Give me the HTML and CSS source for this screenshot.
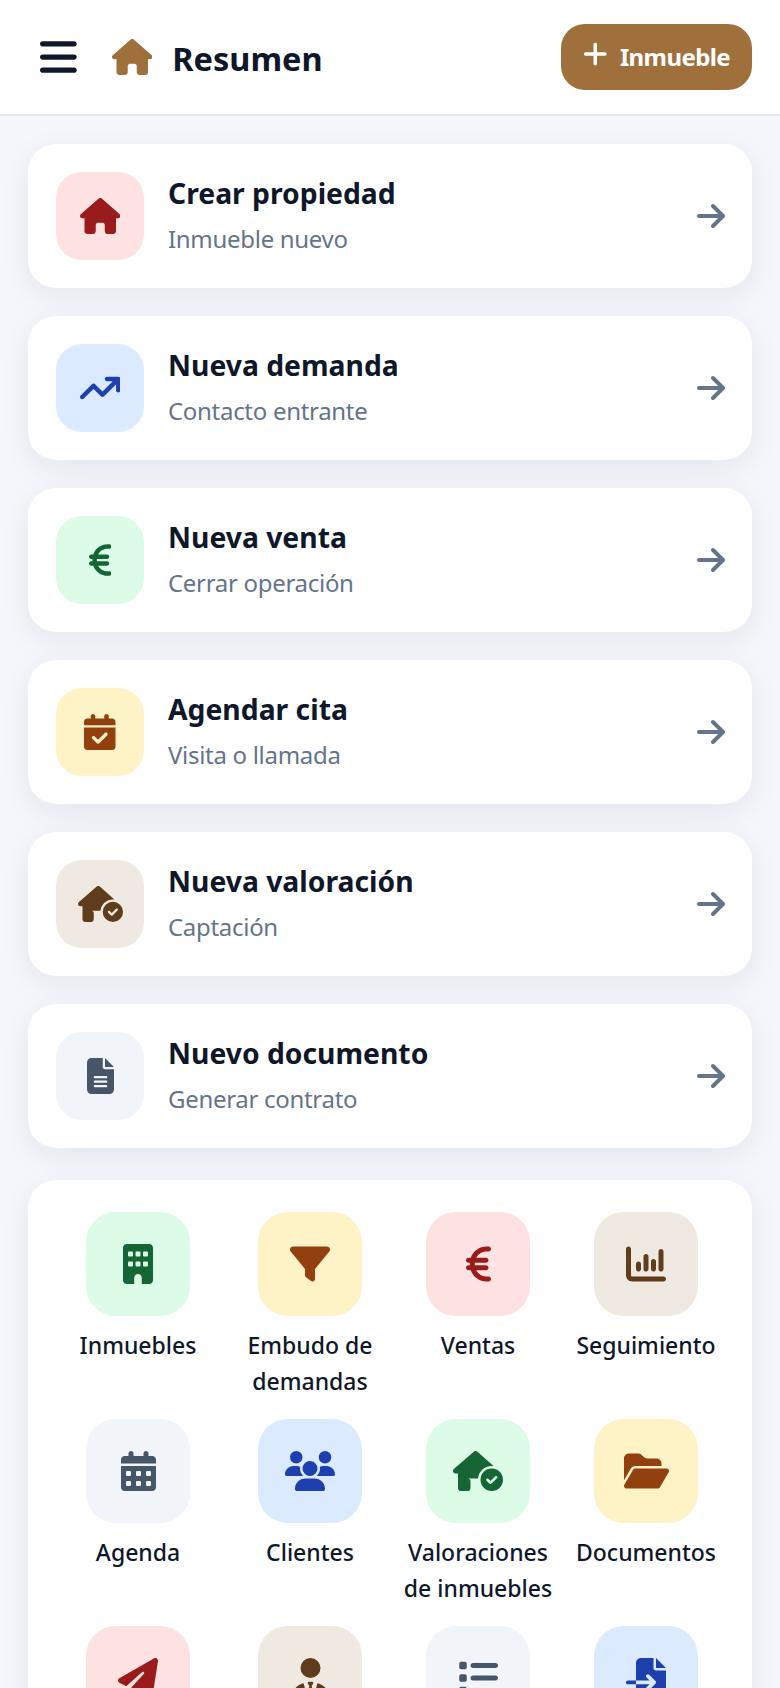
FILE: index.html
```html
<!DOCTYPE html>
<html lang="es">

<head>
    <meta charset="UTF-8">
    <title>Resumen</title>
    <link rel="stylesheet" href="styles.css">
</head>

<body>
    <svg class="sprite" xmlns="http://www.w3.org/2000/svg">
        <symbol id="i-house" viewBox="0 0 576 512"><path d="M575.8 255.5c0 18-15 32.1-32 32.1h-32l.7 160.2c0 2.7-.2 5.4-.5 8.1V472c0 22.1-17.9 40-40 40H456c-1.1 0-2.2 0-3.3-.1c-1.4 .1-2.8 .1-4.2 .1H416 392c-22.1 0-40-17.9-40-40V448 384c0-17.7-14.3-32-32-32H256c-17.7 0-32 14.3-32 32v64 24c0 22.1-17.9 40-40 40H160 128.1c-1.5 0-3-.1-4.5-.2c-1.2 .1-2.4 .2-3.6 .2H104c-22.1 0-40-17.9-40-40V360c0-.9 0-1.9 .1-2.8V287.6H32c-18 0-32-14-32-32.1c0-9 3-17 10-24L266.4 8c7-7 15-8 22-8s15 2 21 7L564.8 231.5c8 7 12 15 11 24z"/></symbol>
        <symbol id="i-euro" viewBox="0 0 320 512"><path d="M48.1 240c-.1 2.7-.1 5.3-.1 8v16c0 2.7 0 5.3 .1 8H32c-17.7 0-32 14.3-32 32s14.3 32 32 32H60.3C89.9 419.9 170 480 264 480h24c17.7 0 32-14.3 32-32s-14.3-32-32-32H264c-57.9 0-108.2-32.4-133.9-80H256c17.7 0 32-14.3 32-32s-14.3-32-32-32H112.2c-.1-2.6-.2-5.3-.2-8V248c0-2.7 .1-5.4 .2-8H256c17.7 0 32-14.3 32-32s-14.3-32-32-32H130.1c25.7-47.6 76-80 133.9-80h24c17.7 0 32-14.3 32-32s-14.3-32-32-32H264C170 32 89.9 92.1 60.3 176H32c-17.7 0-32 14.3-32 32s14.3 32 32 32H48.1z"/></symbol>
        <symbol id="i-house-check" viewBox="0 0 640 512"><path d="M320.7 352c8.1-89.7 83.5-160 175.3-160c8.9 0 17.6 .7 26.1 1.9L309.5 7c-6-5-14-7-21-7s-15 1-22 8L10 231.5c-7 7-10 15-10 24c0 18 14 32.1 32 32.1h32v69.7c-.1 .9-.1 1.8-.1 2.8V472c0 22.1 17.9 40 40 40h16c1.2 0 2.4-.1 3.6-.2c1.5 .1 3 .2 4.5 .2H160h24c22.1 0 40-17.9 40-40V448 384c0-17.7-14.3-32-32-32h64l.7 0zM640 368a144 144 0 1 0 -288 0 144 144 0 1 0 288 0zm-76.7-43.3c6.2 6.2 6.2 16.4 0 22.6l-72 72c-6.2 6.2-16.4 6.2-22.6 0l-40-40c-6.2-6.2-6.2-16.4 0-22.6s16.4-6.2 22.6 0L480 385.4l60.7-60.7c6.2-6.2 16.4-6.2 22.6 0z"/></symbol>
        <symbol id="i-arrow" viewBox="0 0 448 512"><path d="M438.6 278.6c12.5-12.5 12.5-32.8 0-45.3l-160-160c-12.5-12.5-32.8-12.5-45.3 0s-12.5 32.8 0 45.3L338.8 224 32 224c-17.7 0-32 14.3-32 32s14.3 32 32 32l306.7 0L233.4 393.4c-12.5 12.5-12.5 32.8 0 45.3s32.8 12.5 45.3 0l160-160z"/></symbol>
    </svg>

    <header class="topbar">
        <div class="topbar-left">
            <svg class="menu-icon" viewBox="0 0 448 512"><path d="M0 96C0 78.3 14.3 64 32 64H416c17.7 0 32 14.3 32 32s-14.3 32-32 32H32C14.3 128 0 113.7 0 96zM0 256c0-17.7 14.3-32 32-32H416c17.7 0 32 14.3 32 32s-14.3 32-32 32H32c-17.7 0-32-14.3-32-32zM448 416c0 17.7-14.3 32-32 32H32c-17.7 0-32-14.3-32-32s14.3-32 32-32H416c17.7 0 32 14.3 32 32z"/></svg>
            <svg class="brand-icon" viewBox="0 0 576 512"><use href="#i-house"/></svg>
            <h1 class="page-title">Resumen</h1>
        </div>
        <a class="add-btn" href="#">
            <svg class="add-icon" viewBox="0 0 448 512"><path d="M256 80c0-17.7-14.3-32-32-32s-32 14.3-32 32V224H48c-17.7 0-32 14.3-32 32s14.3 32 32 32H192V432c0 17.7 14.3 32 32 32s32-14.3 32-32V288H400c17.7 0 32-14.3 32-32s-14.3-32-32-32H256V80z"/></svg>
            <span class="add-label">Inmueble</span>
        </a>
    </header>

    <main class="content">
        <a class="action-card" href="#">
            <span class="tile red"><svg class="tile-icon" viewBox="0 0 576 512"><use href="#i-house"/></svg></span>
            <span class="action-text">
                <strong class="action-title">Crear propiedad</strong>
                <span class="action-sub">Inmueble nuevo</span>
            </span>
            <svg class="arrow" viewBox="0 0 448 512"><use href="#i-arrow"/></svg>
        </a>
        <a class="action-card" href="#">
            <span class="tile blue"><svg class="tile-icon" viewBox="0 0 576 512"><path d="M384 160c-17.7 0-32-14.3-32-32s14.3-32 32-32H544c17.7 0 32 14.3 32 32V288c0 17.7-14.3 32-32 32s-32-14.3-32-32V205.3L342.6 374.6c-12.5 12.5-32.8 12.5-45.3 0L192 269.3 54.6 406.6c-12.5 12.5-32.8 12.5-45.3 0s-12.5-32.8 0-45.3l160-160c12.5-12.5 32.8-12.5 45.3 0L320 306.7 466.7 160H384z"/></svg></span>
            <span class="action-text">
                <strong class="action-title">Nueva demanda</strong>
                <span class="action-sub">Contacto entrante</span>
            </span>
            <svg class="arrow" viewBox="0 0 448 512"><use href="#i-arrow"/></svg>
        </a>
        <a class="action-card" href="#">
            <span class="tile green"><svg class="tile-icon" viewBox="0 0 320 512"><use href="#i-euro"/></svg></span>
            <span class="action-text">
                <strong class="action-title">Nueva venta</strong>
                <span class="action-sub">Cerrar operación</span>
            </span>
            <svg class="arrow" viewBox="0 0 448 512"><use href="#i-arrow"/></svg>
        </a>
        <a class="action-card" href="#">
            <span class="tile amber"><svg class="tile-icon" viewBox="0 0 448 512"><path d="M128 0c17.7 0 32 14.3 32 32V64H288V32c0-17.7 14.3-32 32-32s32 14.3 32 32V64h48c26.5 0 48 21.5 48 48v48H0V112C0 85.5 21.5 64 48 64H96V32c0-17.7 14.3-32 32-32zM0 192H448V464c0 26.5-21.5 48-48 48H48c-26.5 0-48-21.5-48-48V192zM329 305c9.4-9.4 9.4-24.6 0-33.9s-24.6-9.4-33.9 0l-95 95-47-47c-9.4-9.4-24.6-9.4-33.9 0s-9.4 24.6 0 33.9l64 64c9.4 9.4 24.6 9.4 33.9 0L329 305z"/></svg></span>
            <span class="action-text">
                <strong class="action-title">Agendar cita</strong>
                <span class="action-sub">Visita o llamada</span>
            </span>
            <svg class="arrow" viewBox="0 0 448 512"><use href="#i-arrow"/></svg>
        </a>
        <a class="action-card" href="#">
            <span class="tile brown"><svg class="tile-icon" viewBox="0 0 640 512"><use href="#i-house-check"/></svg></span>
            <span class="action-text">
                <strong class="action-title">Nueva valoración</strong>
                <span class="action-sub">Captación</span>
            </span>
            <svg class="arrow" viewBox="0 0 448 512"><use href="#i-arrow"/></svg>
        </a>
        <a class="action-card" href="#">
            <span class="tile slate"><svg class="tile-icon" viewBox="0 0 384 512"><path d="M64 0C28.7 0 0 28.7 0 64V448c0 35.3 28.7 64 64 64H320c35.3 0 64-28.7 64-64V160H256c-17.7 0-32-14.3-32-32V0H64zM256 0V128H384L256 0zM112 256H272c8.8 0 16 7.2 16 16s-7.2 16-16 16H112c-8.8 0-16-7.2-16-16s7.2-16 16-16zm0 64H272c8.8 0 16 7.2 16 16s-7.2 16-16 16H112c-8.8 0-16-7.2-16-16s7.2-16 16-16zm0 64H272c8.8 0 16 7.2 16 16s-7.2 16-16 16H112c-8.8 0-16-7.2-16-16s7.2-16 16-16z"/></svg></span>
            <span class="action-text">
                <strong class="action-title">Nuevo documento</strong>
                <span class="action-sub">Generar contrato</span>
            </span>
            <svg class="arrow" viewBox="0 0 448 512"><use href="#i-arrow"/></svg>
        </a>

        <section class="shortcuts">
            <a class="shortcut" href="#">
                <span class="tile big green"><svg class="tile-icon" viewBox="0 0 384 512"><path d="M48 0C21.5 0 0 21.5 0 48V464c0 26.5 21.5 48 48 48h96V432c0-26.5 21.5-48 48-48s48 21.5 48 48v80h96c26.5 0 48-21.5 48-48V48c0-26.5-21.5-48-48-48H48zM64 240c0-8.8 7.2-16 16-16h32c8.8 0 16 7.2 16 16v32c0 8.8-7.2 16-16 16H80c-8.8 0-16-7.2-16-16V240zm112-16h32c8.8 0 16 7.2 16 16v32c0 8.8-7.2 16-16 16H176c-8.8 0-16-7.2-16-16V240c0-8.8 7.2-16 16-16zm80 16c0-8.8 7.2-16 16-16h32c8.8 0 16 7.2 16 16v32c0 8.8-7.2 16-16 16H272c-8.8 0-16-7.2-16-16V240zM80 96h32c8.8 0 16 7.2 16 16v32c0 8.8-7.2 16-16 16H80c-8.8 0-16-7.2-16-16V112c0-8.8 7.2-16 16-16zm80 16c0-8.8 7.2-16 16-16h32c8.8 0 16 7.2 16 16v32c0 8.8-7.2 16-16 16H176c-8.8 0-16-7.2-16-16V112zM272 96h32c8.8 0 16 7.2 16 16v32c0 8.8-7.2 16-16 16H272c-8.8 0-16-7.2-16-16V112c0-8.8 7.2-16 16-16z"/></svg></span>
                <span class="shortcut-label">Inmuebles</span>
            </a>
            <a class="shortcut" href="#">
                <span class="tile big amber"><svg class="tile-icon" viewBox="0 0 512 512"><path d="M3.9 54.9C10.5 40.9 24.5 32 40 32H472c15.5 0 29.5 8.9 36.1 22.9s4.6 30.5-5.2 42.5L320 320.9V448c0 12.1-6.8 23.2-17.7 28.6s-23.8 4.3-33.5-3l-64-48c-8.1-6-12.8-15.5-12.8-25.6V320.9L9 97.3C-.7 85.4-2.8 68.8 3.9 54.9z"/></svg></span>
                <span class="shortcut-label">Embudo de demandas</span>
            </a>
            <a class="shortcut" href="#">
                <span class="tile big red"><svg class="tile-icon" viewBox="0 0 320 512"><use href="#i-euro"/></svg></span>
                <span class="shortcut-label">Ventas</span>
            </a>
            <a class="shortcut" href="#">
                <span class="tile big brown"><svg class="tile-icon" viewBox="0 0 512 512"><path d="M32 32c17.7 0 32 14.3 32 32V400c0 8.8 7.2 16 16 16H480c17.7 0 32 14.3 32 32s-14.3 32-32 32H80c-44.2 0-80-35.8-80-80V64C0 46.3 14.3 32 32 32zM160 224c17.7 0 32 14.3 32 32v64c0 17.7-14.3 32-32 32s-32-14.3-32-32V256c0-17.7 14.3-32 32-32zm128-64V320c0 17.7-14.3 32-32 32s-32-14.3-32-32V160c0-17.7 14.3-32 32-32s32 14.3 32 32zm64 32c17.7 0 32 14.3 32 32v96c0 17.7-14.3 32-32 32s-32-14.3-32-32V224c0-17.7 14.3-32 32-32zM480 96V320c0 17.7-14.3 32-32 32s-32-14.3-32-32V96c0-17.7 14.3-32 32-32s32 14.3 32 32z"/></svg></span>
                <span class="shortcut-label">Seguimiento</span>
            </a>

            <a class="shortcut" href="#">
                <span class="tile big slate"><svg class="tile-icon" viewBox="0 0 448 512"><path d="M128 0c17.7 0 32 14.3 32 32V64H288V32c0-17.7 14.3-32 32-32s32 14.3 32 32V64h48c26.5 0 48 21.5 48 48v48H0V112C0 85.5 21.5 64 48 64H96V32c0-17.7 14.3-32 32-32zM0 192H448V464c0 26.5-21.5 48-48 48H48c-26.5 0-48-21.5-48-48V192zm64 80v32c0 8.8 7.2 16 16 16h32c8.8 0 16-7.2 16-16V272c0-8.8-7.2-16-16-16H80c-8.8 0-16 7.2-16 16zm128 0v32c0 8.8 7.2 16 16 16h32c8.8 0 16-7.2 16-16V272c0-8.8-7.2-16-16-16H208c-8.8 0-16 7.2-16 16zm144-16c-8.8 0-16 7.2-16 16v32c0 8.8 7.2 16 16 16h32c8.8 0 16-7.2 16-16V272c0-8.8-7.2-16-16-16H336zM64 400v32c0 8.8 7.2 16 16 16h32c8.8 0 16-7.2 16-16V400c0-8.8-7.2-16-16-16H80c-8.8 0-16 7.2-16 16zm144-16c-8.8 0-16 7.2-16 16v32c0 8.8 7.2 16 16 16h32c8.8 0 16-7.2 16-16V400c0-8.8-7.2-16-16-16H208zm112 16v32c0 8.8 7.2 16 16 16h32c8.8 0 16-7.2 16-16V400c0-8.8-7.2-16-16-16H336c-8.8 0-16 7.2-16 16z"/></svg></span>
                <span class="shortcut-label">Agenda</span>
            </a>
            <a class="shortcut" href="#">
                <span class="tile big blue"><svg class="tile-icon" viewBox="0 0 640 512"><path d="M144 0a80 80 0 1 1 0 160A80 80 0 1 1 144 0zM512 0a80 80 0 1 1 0 160A80 80 0 1 1 512 0zM0 298.7C0 239.8 47.8 192 106.7 192h42.7c15.9 0 31 3.5 44.6 9.7c-1.3 7.2-1.9 14.7-1.9 22.3c0 38.2 16.8 72.5 43.3 96c-.2 0-.4 0-.7 0H21.3C9.6 320 0 310.4 0 298.7zM405.3 320c-.2 0-.4 0-.7 0c26.6-23.5 43.3-57.8 43.3-96c0-7.6-.7-15-1.9-22.3c13.6-6.3 28.7-9.7 44.6-9.7h42.7C592.2 192 640 239.8 640 298.7c0 11.8-9.6 21.3-21.3 21.3H405.3zM224 224a96 96 0 1 1 192 0 96 96 0 1 1 -192 0zM128 485.3C128 411.7 187.7 352 261.3 352H378.7C452.3 352 512 411.7 512 485.3c0 14.7-11.9 26.7-26.7 26.7H154.7c-14.7 0-26.7-11.9-26.7-26.7z"/></svg></span>
                <span class="shortcut-label">Clientes</span>
            </a>
            <a class="shortcut" href="#">
                <span class="tile big green"><svg class="tile-icon" viewBox="0 0 640 512"><use href="#i-house-check"/></svg></span>
                <span class="shortcut-label">Valoraciones de inmuebles</span>
            </a>
            <a class="shortcut" href="#">
                <span class="tile big amber"><svg class="tile-icon" viewBox="0 0 576 512"><path d="M88.7 223.8L0 375.8V96C0 60.7 28.7 32 64 32H181.5c17 0 33.3 6.7 45.3 18.7l26.5 26.5c12 12 28.3 18.7 45.3 18.7H416c35.3 0 64 28.7 64 64v32H144c-22.8 0-43.8 12.1-55.3 31.8zm27.6 16.1C122.1 230 132.6 224 144 224H544c11.5 0 22 6.1 27.7 16.1s5.7 22.2-.1 32.1l-112 192C453.9 474 443.4 480 432 480H32c-11.5 0-22-6.1-27.7-16.1s-5.7-22.2 .1-32.1l112-192z"/></svg></span>
                <span class="shortcut-label">Documentos</span>
            </a>

            <a class="shortcut" href="#">
                <span class="tile big red"><svg class="tile-icon" viewBox="0 0 512 512"><path d="M498.1 5.6c10.1 7 15.4 19.1 13.5 31.2l-64 416c-1.5 9.7-7.4 18.2-16 23s-18.9 5.4-28 1.6L284 427.7l-68.5 74.1c-8.9 9.7-22.9 12.9-35.2 8.1S160 493.2 160 480V396.4c0-4 1.5-7.8 4.2-10.7L331.8 202.8c5.8-6.3 5.6-16-.4-22s-15.7-6.4-22-.7L106 360.8 17.7 316.6C7.1 311.3 .3 300.7 0 288.9s5.9-22.8 16.1-28.7l448-256c10.7-6.1 23.9-5.5 34 1.4z"/></svg></span>
            </a>
            <a class="shortcut" href="#">
                <span class="tile big brown"><svg class="tile-icon" viewBox="0 0 448 512"><path d="M96 128a128 128 0 1 0 256 0A128 128 0 1 0 96 128zm94.5 200.2l18.6 31L175.8 483.1l-36-146.9c-2-8.1-9.8-13.4-17.9-11.3C51.9 342.4 0 405.8 0 481.3c0 17 13.8 30.7 30.7 30.7H162.5c0 0 0 0 .1 0H168 280h5.5c0 0 0 0 .1 0H417.3c17 0 30.7-13.8 30.7-30.7c0-75.5-51.9-138.9-121.9-156.4c-8.1-2-15.9 3.3-17.9 11.3l-36 146.9L238.9 359.2l18.6-31c6.4-10.7-1.3-24.2-13.7-24.2H224 204.3c-12.4 0-20.1 13.6-13.7 24.2z"/></svg></span>
            </a>
            <a class="shortcut" href="#">
                <span class="tile big slate"><svg class="tile-icon" viewBox="0 0 512 512"><path d="M40 48C26.7 48 16 58.7 16 72v48c0 13.3 10.7 24 24 24H88c13.3 0 24-10.7 24-24V72c0-13.3-10.7-24-24-24H40zM192 64c-17.7 0-32 14.3-32 32s14.3 32 32 32H480c17.7 0 32-14.3 32-32s-14.3-32-32-32H192zm0 160c-17.7 0-32 14.3-32 32s14.3 32 32 32H480c17.7 0 32-14.3 32-32s-14.3-32-32-32H192zm0 160c-17.7 0-32 14.3-32 32s14.3 32 32 32H480c17.7 0 32-14.3 32-32s-14.3-32-32-32H192zM16 232v48c0 13.3 10.7 24 24 24H88c13.3 0 24-10.7 24-24V232c0-13.3-10.7-24-24-24H40c-13.3 0-24 10.7-24 24zM40 368c-13.3 0-24 10.7-24 24v48c0 13.3 10.7 24 24 24H88c13.3 0 24-10.7 24-24V392c0-13.3-10.7-24-24-24H40z"/></svg></span>
            </a>
            <a class="shortcut" href="#">
                <span class="tile big blue"><svg class="tile-icon" viewBox="0 0 512 512"><path d="M128 64c0-35.3 28.7-64 64-64H352V128c0 17.7 14.3 32 32 32H512V448c0 35.3-28.7 64-64 64H192c-35.3 0-64-28.7-64-64V336H302.1l-39 39c-9.4 9.4-9.4 24.6 0 33.9s24.6 9.4 33.9 0l80-80c9.4-9.4 9.4-24.6 0-33.9l-80-80c-9.4-9.4-24.6-9.4-33.9 0s-9.4 24.6 0 33.9l39 39H128V64zm0 224v48H24c-13.3 0-24-10.7-24-24s10.7-24 24-24H128zM512 128H384V0L512 128z"/></svg></span>
            </a>
        </section>
    </main>
</body>

</html>
```

FILE: styles.css
```css
html,
body {
    margin: 0;
    padding: 0;
    height: 1688px;
    overflow: hidden;
}

body {
    background: #f4f6fb;
    color: #0f172a;
    font-family: "Noto Sans", "Open Sans", sans-serif;
}

a {
    text-decoration: none;
    color: inherit;
}

svg {
    fill: currentColor;
    display: block;
}

.sprite {
    display: none;
}

/* cabecera */
.topbar {
    height: 114px;
    background: #ffffff;
    border-bottom: 2px solid #e4e7f0;
    padding: 0 28px 0 40px;
    display: flex;
    align-items: center;
    justify-content: space-between;
}

.topbar-left {
    display: flex;
    align-items: center;
}

.menu-icon {
    height: 42px;
    color: #0f172a;
    margin-right: 35px;
}

.brand-icon {
    height: 36px;
    color: #a0703c;
    margin-right: 20px;
}

.page-title {
    margin: 4px 0 0;
    font-size: 32.5px;
    font-weight: 700;
    line-height: 44px;
}

.add-btn {
    height: 66px;
    padding: 0 22px;
    border-radius: 24px;
    background: #a0703c;
    color: #ffffff;
    font-size: 24px;
    font-weight: 700;
    letter-spacing: -0.6px;
    display: flex;
    align-items: center;
    gap: 12px;
}

.add-label {
    margin-top: -2px;
}

.add-icon {
    height: 28px;
    margin-top: -6px;
}

/* tarjetas de accion */
.content {
    padding: 28px 28px 0;
    display: flex;
    flex-direction: column;
    gap: 28px;
}

.action-card {
    height: 144px;
    box-sizing: border-box;
    padding: 0 27px 0 28px;
    border-radius: 28px;
    background: #ffffff;
    box-shadow: 0 8px 30px rgba(15, 23, 42, 0.07);
    display: flex;
    align-items: center;
}

.tile {
    flex: none;
    width: 88px;
    height: 88px;
    border-radius: 26px;
    display: flex;
    align-items: center;
    justify-content: center;
}

.tile.big {
    width: 104px;
    height: 104px;
    border-radius: 30px;
}

.tile-icon {
    height: 36px;
}

.tile.big .tile-icon {
    height: 40px;
}

.red {
    background: #fee2e2;
    color: #991b1b;
}

.blue {
    background: #dbeafe;
    color: #1e40af;
}

.green {
    background: #dcfce7;
    color: #166534;
}

.amber {
    background: #fef3c7;
    color: #92400e;
}

.brown {
    background: #f0e9e1;
    color: #5f3d1c;
}

.slate {
    background: #f1f5f9;
    color: #475569;
}

.action-text {
    flex: 1;
    margin-left: 24px;
    padding-bottom: 2px;
    display: flex;
    flex-direction: column;
    gap: 10px;
}

.action-title {
    font-size: 28.3px;
    font-weight: 700;
    line-height: 38px;
}

.action-sub {
    font-size: 24px;
    letter-spacing: -0.3px;
    line-height: 34px;
    color: #64748b;
}

.arrow {
    height: 32px;
    color: #64748b;
}

/* accesos directos */
.shortcuts {
    margin-top: 4px;
    padding: 32px 20px;
    border-radius: 28px;
    background: #ffffff;
    box-shadow: 0 8px 30px rgba(15, 23, 42, 0.07);
    display: grid;
    grid-template-columns: 180px 164px 172px 164px;
    row-gap: 20px;
}

.shortcut {
    display: flex;
    flex-direction: column;
    align-items: center;
    gap: 12px;
}

.shortcut-label {
    min-height: 71px;
    font-size: 23px;
    font-weight: 500;
    line-height: 35.5px;
    text-align: center;
}
```
